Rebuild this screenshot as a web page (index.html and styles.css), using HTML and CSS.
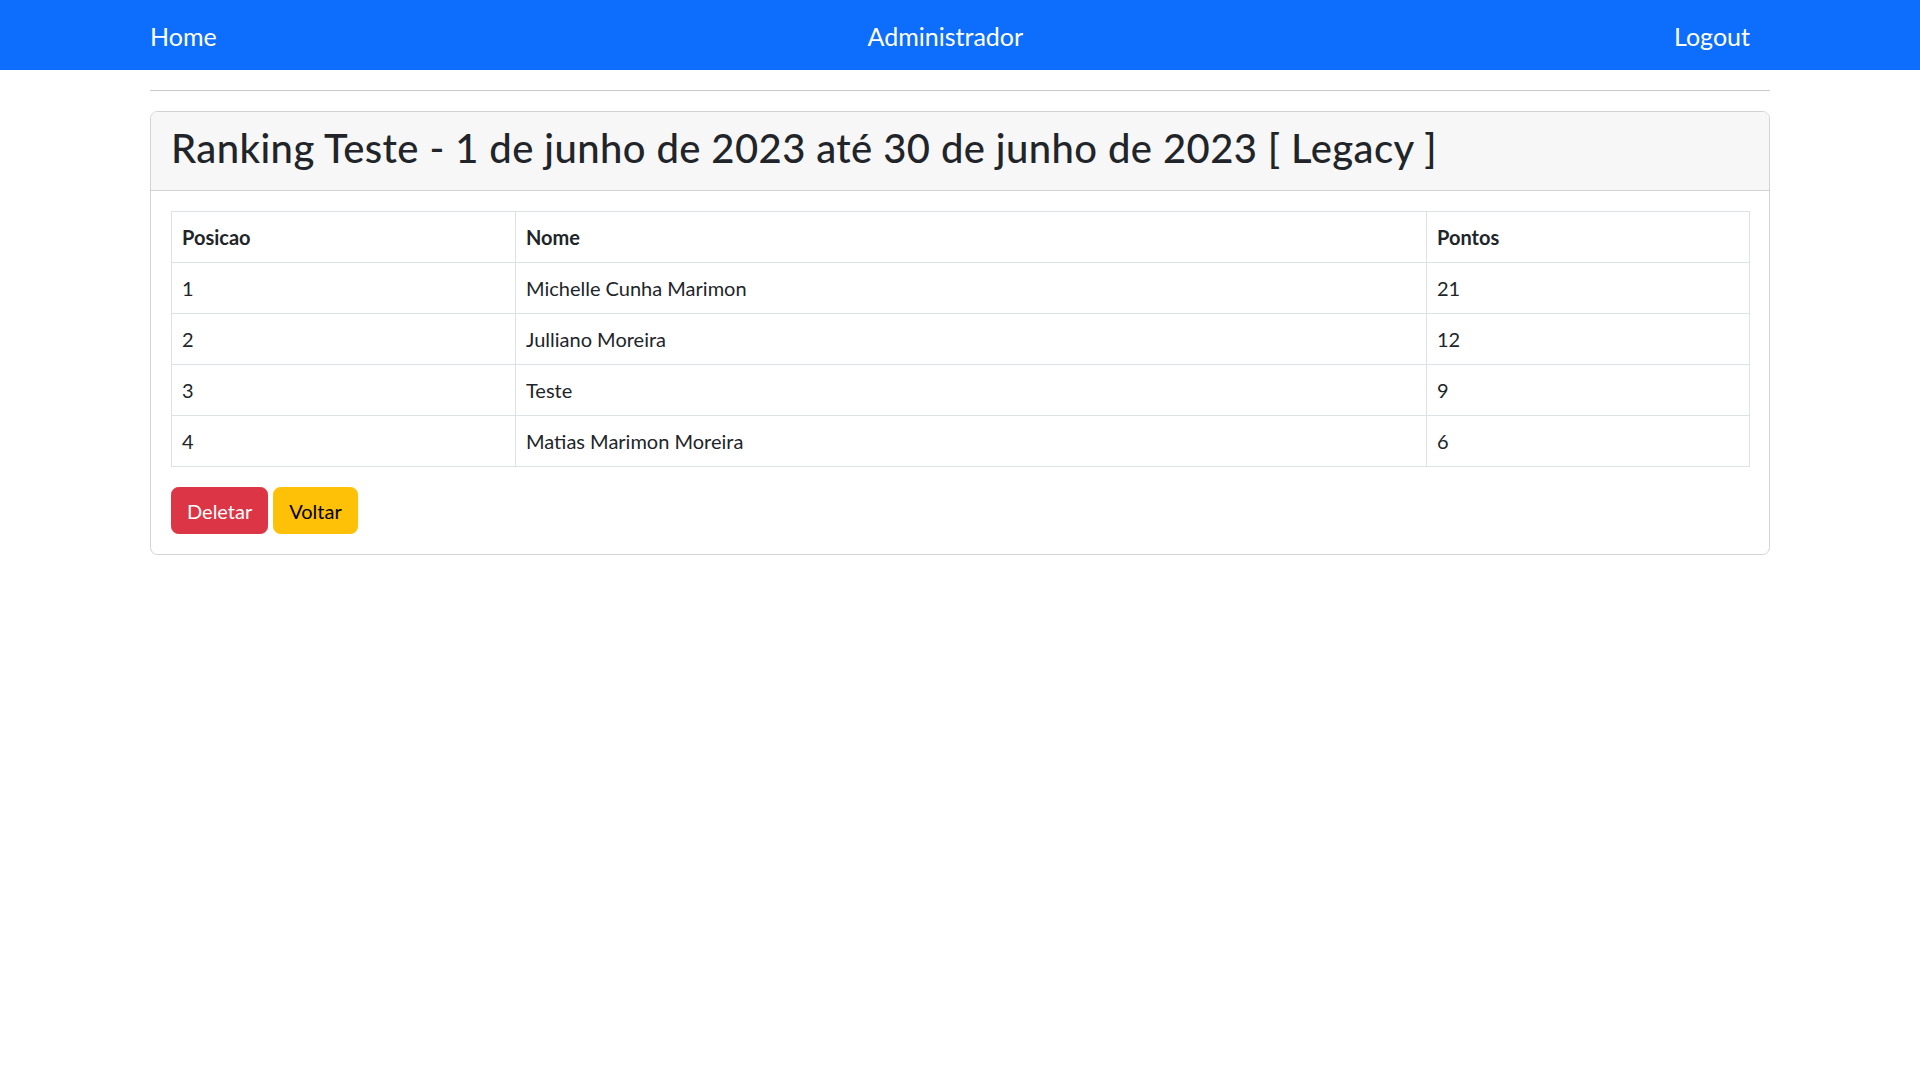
FILE: index.html
```html
<!DOCTYPE html>
<html lang="pt-BR">
<head>
<meta charset="utf-8">
<title>Ranking</title>
<link rel="stylesheet" href="styles.css">
</head>
<body>
<nav class="navbar">
  <div class="nav-container">
    <a class="brand" href="#">Home</a>
    <a class="brand" href="#">Administrador</a>
    <a class="brand" href="#">Logout</a>
  </div>
</nav>
<main class="container">
  <hr class="divider">
  <section class="card">
    <div class="card-header">
      <h2 class="card-title">Ranking Teste - 1 de junho de 2023 até 30 de junho de 2023 [ Legacy ]</h2>
    </div>
    <div class="card-body">
      <table class="ranking">
        <colgroup>
          <col class="col-pos">
          <col class="col-name">
          <col class="col-pts">
        </colgroup>
        <thead>
          <tr><th>Posicao</th><th>Nome</th><th>Pontos</th></tr>
        </thead>
        <tbody>
          <tr><td>1</td><td>Michelle Cunha Marimon</td><td>21</td></tr>
          <tr><td>2</td><td>Julliano Moreira</td><td>12</td></tr>
          <tr><td>3</td><td>Teste</td><td>9</td></tr>
          <tr><td>4</td><td>Matias Marimon Moreira</td><td>6</td></tr>
        </tbody>
      </table>
      <div class="actions">
        <button class="btn btn-danger" type="button">Deletar</button>
        <button class="btn btn-warning" type="button">Voltar</button>
      </div>
    </div>
  </section>
</main>
</body>
</html>
```

FILE: styles.css
```css
* { box-sizing: border-box; }

body {
  margin: 0;
  font-family: Lato, "Open Sans", "Liberation Sans", sans-serif;
  font-size: 20px;
  line-height: 1.5;
  color: #212529;
  background: #fff;
}

.navbar {
  background: #0d6efd;
  padding: 10px 0;
}

.nav-container {
  width: 1650px;
  margin: 0 auto;
  padding: 0 15px;
  display: flex;
  align-items: center;
  justify-content: space-between;
}

.brand {
  color: #fff;
  text-decoration: none;
  font-size: 25px;
  line-height: 37.5px;
  padding: 7.5px 0 5px;
  margin-right: 20px;
}

.container {
  width: 1650px;
  margin: 0 auto;
  padding: 0 15px;
}

.divider {
  margin: 20px 0;
  border: 0;
  border-top: 1px solid #c8c9ca;
  height: 0;
}

.card {
  border: 1px solid #d2d2d2;
  border-radius: 7.5px;
  overflow: hidden;
}

.card-header {
  background: #f7f7f7;
  padding: 10px 20px;
  border-bottom: 1px solid #d2d2d2;
}

.card-title {
  margin: 0 0 8px;
  padding-top: 2px;
  font-size: 40px;
  font-weight: 500;
  line-height: 1.2;
  letter-spacing: 0.4px;
}

.card-body {
  padding: 20px;
}

.ranking {
  width: 100%;
  border-collapse: collapse;
  table-layout: fixed;
  margin-bottom: 20px;
  border: 1px solid #dee2e6;
}

.col-pos { width: 344px; }
.col-name { width: 911px; }
.col-pts { width: 323px; }

.ranking th,
.ranking td {
  border: 1px solid #dee2e6;
  padding: 10px;
  text-align: left;
  line-height: 30px;
  vertical-align: top;
}

.ranking th {
  font-weight: 700;
}

.actions {
  display: flex;
  gap: 5px;
}

.btn {
  font-family: inherit;
  font-size: 20px;
  line-height: 30px;
  padding: 7.5px 15px;
  border: 1px solid transparent;
  border-radius: 7.5px;
  cursor: pointer;
}

.btn-danger {
  background: #dc3545;
  border-color: #dc3545;
  color: #fff;
}

.btn-warning {
  background: #ffc107;
  border-color: #ffc107;
  color: #000;
}
```
